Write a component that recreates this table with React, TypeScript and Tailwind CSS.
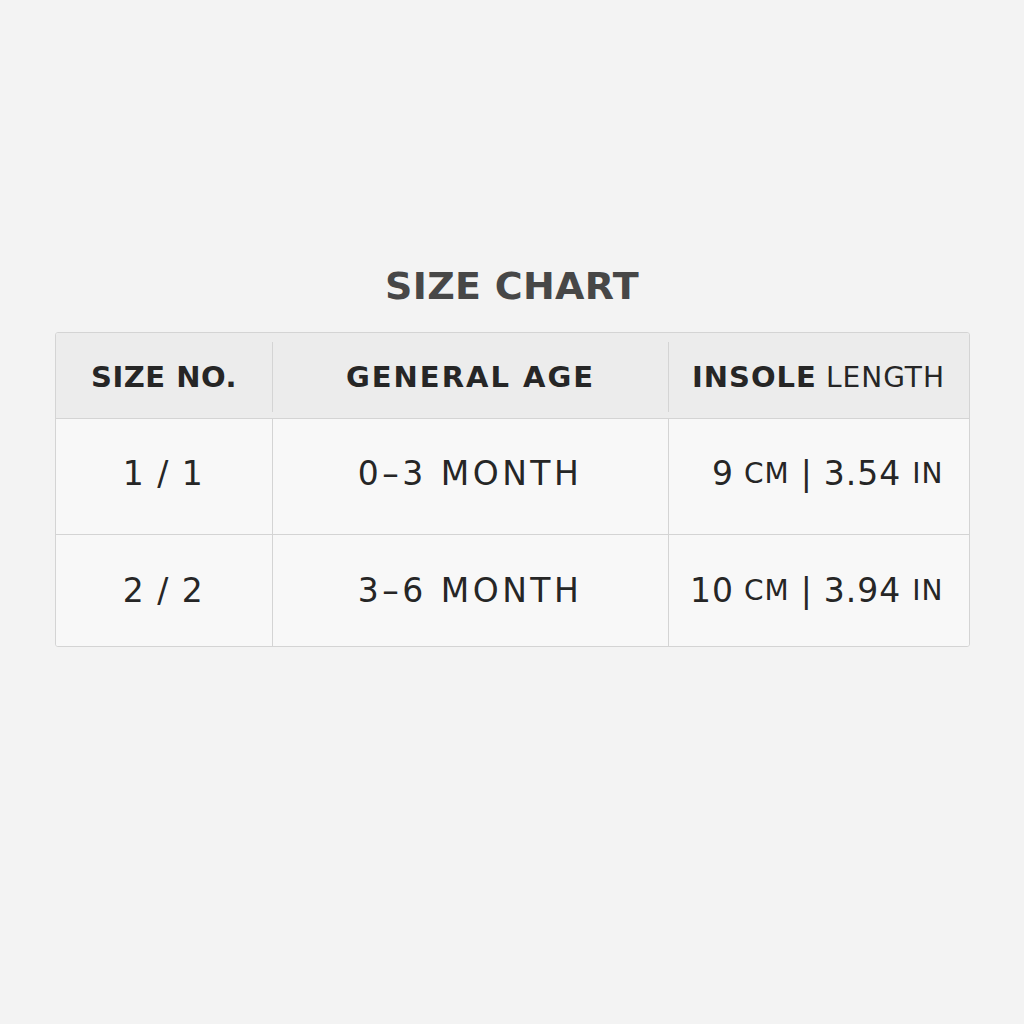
import React from 'react'

// 사이즈 표 데이터
const rows = [
  { size: '1 / 1', age: '0–3 MONTH', cm: '9', inch: '3.54' },
  { size: '2 / 2', age: '3–6 MONTH', cm: '10', inch: '3.94' },
]

const font = { fontFamily: '"DejaVu Sans", "Liberation Sans", sans-serif' }

export default function App() {
  return (
    <div
      className="w-[1024px] h-[1024px] bg-[#f3f3f3] flex flex-col items-center pt-[264px]"
      style={font}
    >
      {/* 제목 */}
      <h1 className="text-[38px] leading-[44px] font-bold text-[#474747] tracking-[0.3px]">
        SIZE CHART
      </h1>

      {/* 표 */}
      <div className="mt-[24px] w-[915px] border border-[#d4d4d4] rounded-[3px] overflow-hidden text-[#262626]">
        {/* 헤더 */}
        <div className="grid grid-cols-[217px_396px_300px] h-[86px] bg-[#ececec] border-b border-[#d4d4d4]">
          <div className="flex items-center justify-center text-[29px] font-bold tracking-[0.5px] pt-[8px] pb-[4px] relative">
            SIZE NO.
            <span className="absolute right-0 top-[9px] bottom-[6px] w-px bg-[#d4d4d4]" />
          </div>
          <div className="flex items-center justify-center text-[29px] font-bold tracking-[2px] pt-[8px] pb-[4px] relative">
            GENERAL AGE
            <span className="absolute right-0 top-[9px] bottom-[6px] w-px bg-[#d4d4d4]" />
          </div>
          <div className="flex items-center justify-center text-[29px] tracking-[1px] pt-[8px] pb-[4px]">
            <span className="font-bold">INSOLE</span>
            <span className="ml-[9px] text-[28px]">LENGTH</span>
          </div>
        </div>

        {/* 본문 */}
        {rows.map((r, i) => {
          const pad = i === 0 ? 'pb-[6px]' : ''
          return (
            <div
              key={r.size}
              className={`grid grid-cols-[217px_396px_300px] bg-[#f8f8f8] ${
                i === 0 ? 'h-[116px] border-b border-[#d4d4d4]' : 'h-[111px]'
              }`}
            >
              <div className={`flex items-center justify-center text-[33px] tracking-[1.5px] border-r border-[#d4d4d4] ${pad}`}>
                {r.size}
              </div>
              <div className={`flex items-center justify-center text-[33px] tracking-[3.5px] border-r border-[#d4d4d4] ${pad}`}>
                {r.age}
              </div>
              <div className={`flex items-center justify-end pr-[25px] text-[33px] tracking-[1px] ${pad}`}>
                {r.cm}
                <span className="ml-[10px] text-[28px]">CM</span>
                <span className="mx-[11px]">|</span>
                {r.inch}
                <span className="ml-[11px] text-[28px]">IN</span>
              </div>
            </div>
          )
        })}
      </div>
    </div>
  )
}
